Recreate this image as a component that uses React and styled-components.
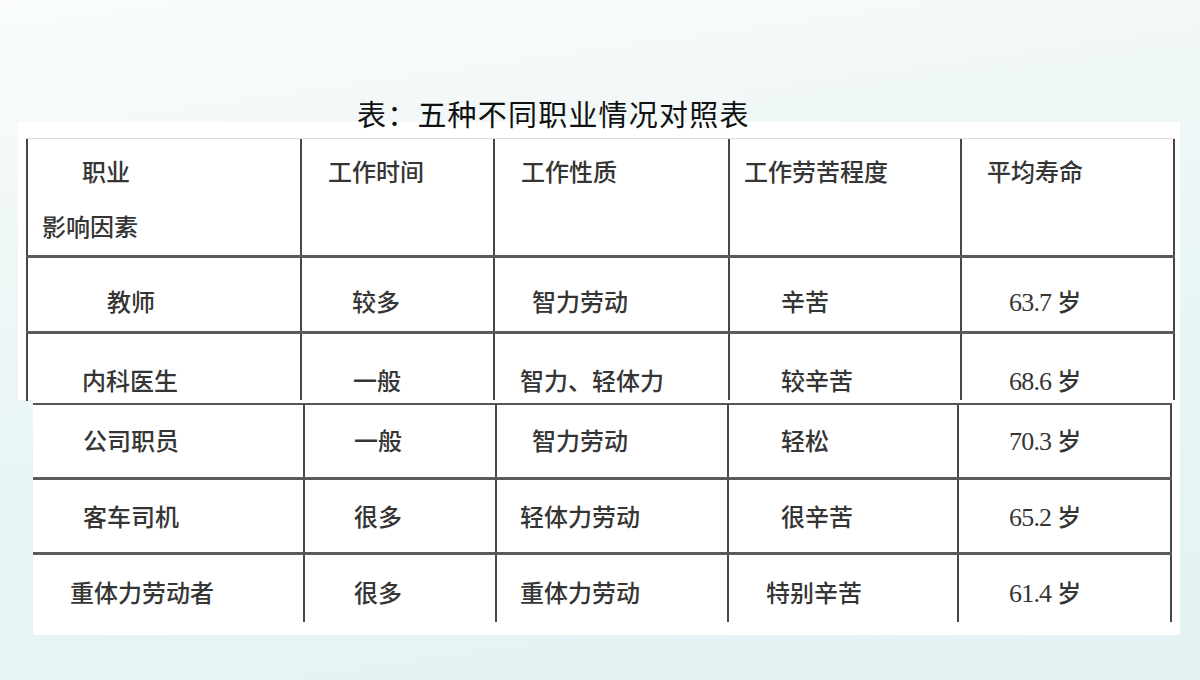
import React from 'react';
import styled, { createGlobalStyle } from 'styled-components';

const GlobalStyle = createGlobalStyle`
  html, body {
    margin: 0;
    padding: 0;
  }
  body {
    width: 1200px;
    height: 680px;
    overflow: hidden;
  }
`;

const CJK = `"Noto Sans CJK SC", "Noto Sans", sans-serif`;
const RULE = '2px solid #474747';

const Page = styled.div`
  width: 1200px;
  height: 680px;
  box-sizing: border-box;
  padding-top: 98px;
  display: flex;
  flex-direction: column;
  background: linear-gradient(172deg, #fafcfc 0%, #f2f8f8 22%, #e8f5f5 60%, #e2f2f2 100%);
`;

const Title = styled.h1`
  margin: 0 0 0 357px;
  height: 30px;
  font-family: ${CJK};
  font-weight: 400;
  font-size: 29px;
  line-height: 30px;
  letter-spacing: 1.2px;
  color: #111;
  position: relative;
  z-index: 2;
`;

const Panel = styled.div`
  box-sizing: border-box;
  background: #fff;
  margin-left: ${(p) => p.$left}px;
  width: ${(p) => p.$width}px;
  height: ${(p) => p.$height}px;
  margin-top: ${(p) => p.$mt || 0}px;
  padding: ${(p) => p.$pad};
`;

const Table = styled.div`
  display: flex;
  flex-direction: column;
  border-top: ${(p) => p.$topLine};
`;

const Row = styled.div`
  display: grid;
  grid-template-columns: ${(p) => p.$cols};
  height: ${(p) => p.$h}px;
  box-sizing: border-box;
  border-bottom: ${(p) => (p.$line ? '3px solid #5a5a5a' : 'none')};
`;

const Cell = styled.div`
  box-sizing: border-box;
  display: flex;
  flex-direction: column;
  padding-top: ${(p) => p.$pt}px;
  border-left: ${(p) => (p.$noLeft ? 'none' : RULE)};
  border-right: ${(p) => (p.$last ? RULE : 'none')};
  font-family: ${CJK};
  font-size: 24px;
  font-weight: 500;
  color: #353535;
`;

const Line = styled.span`
  display: block;
  padding-left: ${(p) => p.$indent}px;
  line-height: ${(p) => p.$lh || 25}px;
  white-space: nowrap;
`;

const Num = styled.span`
  font-family: "Liberation Serif", "Times New Roman", serif;
  font-size: 26px;
  font-weight: 400;
  letter-spacing: -0.8px;
  margin-right: 6px;
`;

const Age = ({ value }) => (
  <>
    <Num>{value}</Num>岁
  </>
);

const topCols = '274px 193px 235px 232px 215px';
const lowCols = '270px 192px 232px 230px 215px';

const topRows = [
  {
    h: 119,
    pt: 4,
    line: true,
    lh: 55,
    cells: [
      [['职业', 54], ['影响因素', 14]],
      [['工作时间', 26]],
      [['工作性质', 26]],
      [['工作劳苦程度', 14]],
      [['平均寿命', 25]],
    ],
  },
  {
    h: 76,
    pt: 30,
    line: true,
    cells: [
      [['教师', 79]],
      [['较多', 50]],
      [['智力劳动', 37]],
      [['辛苦', 51]],
      [[<Age value="63.7" />, 47]],
    ],
  },
  {
    h: 67,
    pt: 33,
    cells: [
      [['内科医生', 54]],
      [['一般', 51]],
      [['智力、轻体力', 25]],
      [['较辛苦', 51]],
      [[<Age value="68.6" />, 47]],
    ],
  },
];

const lowRows = [
  {
    h: 75,
    pt: 22,
    line: true,
    cells: [
      [['公司职员', 50]],
      [['一般', 49]],
      [['智力劳动', 35]],
      [['轻松', 52]],
      [[<Age value="70.3" />, 50]],
    ],
  },
  {
    h: 75,
    pt: 23,
    line: true,
    cells: [
      [['客车司机', 50]],
      [['很多', 49]],
      [['轻体力劳动', 23]],
      [['很辛苦', 52]],
      [[<Age value="65.2" />, 50]],
    ],
  },
  {
    h: 67,
    pt: 24,
    cells: [
      [['重体力劳动者', 37]],
      [['很多', 49]],
      [['重体力劳动', 23]],
      [['特别辛苦', 37]],
      [[<Age value="61.4" />, 50]],
    ],
  },
];

const Grid = ({ rows, cols, topLine, noLeft }) => (
  <Table $topLine={topLine}>
    {rows.map((row, r) => (
      <Row key={r} $cols={cols} $h={row.h} $line={row.line}>
        {row.cells.map((lines, c) => (
          <Cell
            key={c}
            $pt={row.pt}
            $noLeft={noLeft && c === 0}
            $last={c === row.cells.length - 1}
          >
            {lines.map(([text, indent], i) => (
              <Line key={i} $indent={indent} $lh={row.lh}>
                {text}
              </Line>
            ))}
          </Cell>
        ))}
      </Row>
    ))}
  </Table>
);

const App = () => (
  <>
    <GlobalStyle />
    <Page>
      <Title>表：五种不同职业情况对照表</Title>
      <Panel $left={18} $width={1162} $height={278} $mt={-6} $pad="16px 5px 0 8px">
        <Grid rows={topRows} cols={topCols} topLine="1px solid #dcdcdc" />
      </Panel>
      <Panel $left={33} $width={1147} $height={235} $pad="3px 8px 0 0">
        <Grid rows={lowRows} cols={lowCols} topLine="2px solid #555" noLeft />
      </Panel>
    </Page>
  </>
);

export default App;
